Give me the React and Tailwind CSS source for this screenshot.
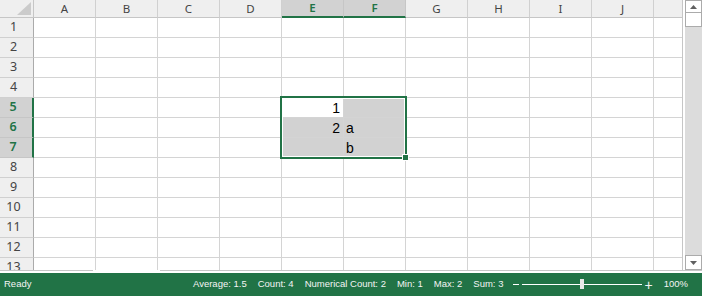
import React from 'react'

const cols = ['A', 'B', 'C', 'D', 'E', 'F', 'G', 'H', 'I', 'J', 'K']
const rowNums = [1, 2, 3, 4, 5, 6, 7, 8, 9, 10, 11, 12, 13]
const selCols = ['E', 'F']
const selRows = [5, 6, 7]
const data = { E5: '1', E6: '2', F6: 'a', F7: 'b' }
const green = 'bg-[#217346]'

const Cell = ({ col, row }) => {
  const key = col + row
  const value = data[key]
  const inSel = selCols.includes(col) && selRows.includes(row)
  const active = key === 'E5'
  const isNum = value && !isNaN(Number(value))
  return (
    <div
      className={`w-[62px] h-[20px] shrink-0 border-r border-b border-[#d4d4d4] flex items-end pb-[1px] text-[14px] leading-[16px] text-black ${
        inSel && !active ? 'bg-[#d2d2d2]' : 'bg-white'
      } ${isNum ? 'justify-end pr-[3px]' : 'pl-[2px]'}`}
    >
      {value}
    </div>
  )
}

const StatusItem = ({ children }) => <span className="whitespace-nowrap shrink-0">{children}</span>

export default function App() {
  return (
    <div className="w-[702px] h-[296px] bg-white overflow-hidden flex flex-col font-['Liberation_Sans',Arial,sans-serif]">
      <div className="flex h-[270px]">
        {/* sheet grid */}
        <div className="relative w-[683px] h-[270px] overflow-hidden border-r border-[#c6c6c6] shrink-0">
          {/* column headers */}
          <div className="flex h-[18px]">
            <div className="w-[34px] h-[18px] shrink-0 bg-[#efefef] border-r border-b border-[#c6c6c6] flex items-end justify-end pr-[2px] pb-[2px]">
              <svg width="14" height="13" viewBox="0 0 14 13">
                <polygon points="14,0 14,13 0,13" fill="#cbcbcb" />
              </svg>
            </div>
            {cols.map((c) => {
              const sel = selCols.includes(c)
              return (
                <div
                  key={c}
                  className={`w-[62px] h-[18px] shrink-0 border-r flex items-center justify-center text-[11.5px] font-['Noto_Sans',sans-serif] ${
                    sel
                      ? 'bg-[#d2d2d2] border-[#c6c6c6] border-b-2 border-b-[#217346] text-[#217346] font-semibold'
                      : 'bg-[#efefef] border-[#d0d0d0] border-b border-b-[#c6c6c6] text-[#444]'
                  }`}
                >
                  {c === 'K' ? '' : c}
                </div>
              )
            })}
          </div>

          {/* rows */}
          {rowNums.map((r) => {
            const sel = selRows.includes(r)
            return (
              <div key={r} className="flex h-[20px]">
                <div
                  className={`w-[34px] h-[20px] shrink-0 border-b flex items-center justify-center pr-[6px] text-[12.5px] font-['Noto_Sans',sans-serif] ${
                    sel
                      ? 'bg-[#d2d2d2] border-[#c6c6c6] border-r-2 border-r-[#217346] text-[#217346] font-semibold'
                      : 'bg-[#efefef] border-[#d0d0d0] border-r border-r-[#ababab] text-[#444]'
                  }`}
                >
                  {r}
                </div>
                {cols.map((c) => (
                  <Cell key={c} col={c} row={r} />
                ))}
              </div>
            )
          })}

          {/* selection box */}
          <div className="absolute left-[280px] top-[96px] w-[127px] h-[63px] border-2 border-[#217346] shadow-[inset_0_0_0_1px_white] pointer-events-none" />
          <div className="absolute left-[402px] top-[154px] w-[7px] h-[7px] bg-[#217346] border border-white" />
        </div>

        {/* vertical scrollbar */}
        <div className="ml-[2px] w-[17px] h-[270px] flex flex-col bg-[#dcdcdc]">
          <div className="h-[13px] bg-white border border-[#ababab] flex items-center justify-center">
            <svg width="7" height="4" viewBox="0 0 7 4">
              <polygon points="3.5,0 7,4 0,4" fill="#606060" />
            </svg>
          </div>
          <div className="h-[14px] bg-white border border-[#ababab] border-t-0" />
          <div className="flex-1" />
          <div className="h-[15px] bg-white border border-[#ababab] flex items-center justify-center">
            <svg width="7" height="4" viewBox="0 0 7 4">
              <polygon points="0,0 7,0 3.5,4" fill="#606060" />
            </svg>
          </div>
        </div>
      </div>

      {/* sheet tab strip edge */}
      <div className="flex h-[3px]">
        <div className="w-[93px] border-t border-[#c6c6c6]" />
        <div className="w-[67px]" />
        <div className="flex-1 border-t border-[#c6c6c6]" />
      </div>

      {/* status bar */}
      <div className={`h-[23px] ${green} flex items-center text-[#f4f4f4] text-[9.5px]`}>
        <span className="w-[193px] shrink-0 pl-[4px]">Ready</span>
        <div className="flex gap-[11px]">
          <StatusItem>Average: 1.5</StatusItem>
          <StatusItem>Count: 4</StatusItem>
          <StatusItem>Numerical Count: 2</StatusItem>
          <StatusItem>Min: 1</StatusItem>
          <StatusItem>Max: 2</StatusItem>
          <StatusItem>Sum: 3</StatusItem>
        </div>
        <div className="ml-auto mr-[14px] flex items-center">
          <span className="w-[6px] h-[1px] bg-white" />
          <div className="relative ml-[3px] w-[120px] h-[1px] bg-white">
            <div className="absolute left-[58px] top-[-5px] w-[4px] h-[10px] bg-[#e8e8e8]" />
          </div>
          <span className="ml-[3px] text-[14px] leading-none">+</span>
          <span className="ml-[11px]">100%</span>
        </div>
      </div>
    </div>
  )
}
